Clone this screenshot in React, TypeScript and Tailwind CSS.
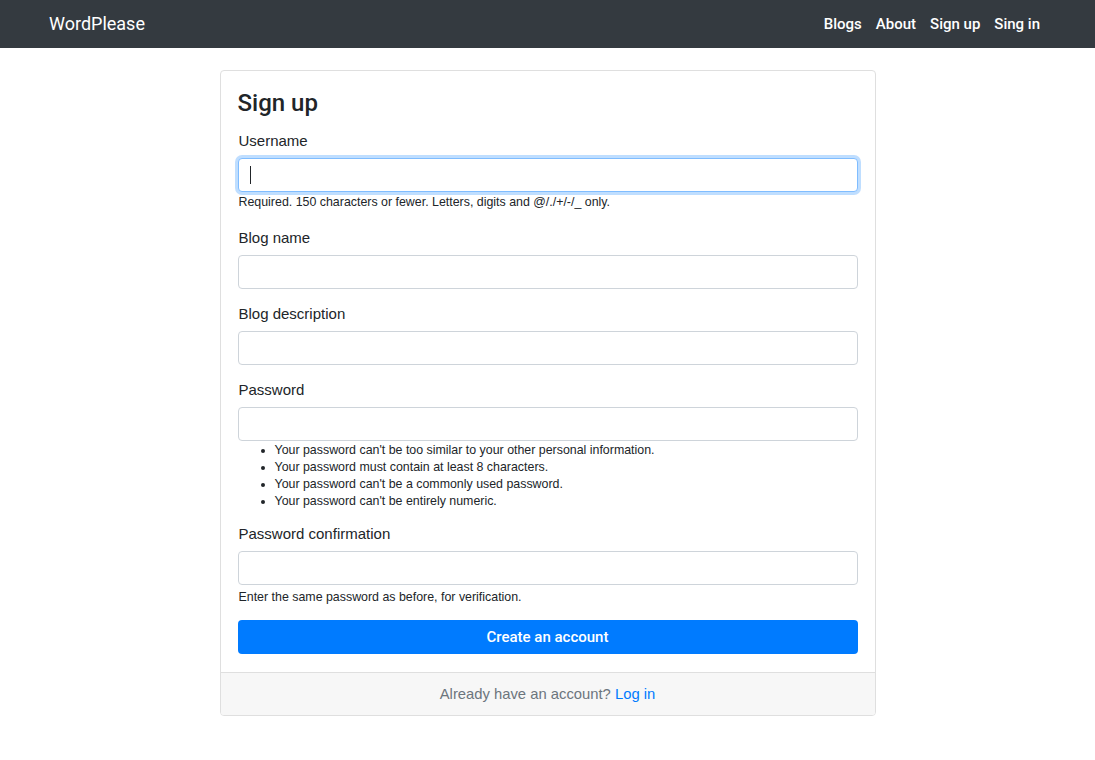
import React from "react";

const font = { fontFamily: '"Liberation Sans", Arial, sans-serif' };
const medium = { fontFamily: 'Roboto, "Liberation Sans", Arial, sans-serif' };

function Field({
  label,
  type = "text",
  focused = false,
  className = "mb-[14px]",
  children,
}: {
  label: string;
  type?: string;
  focused?: boolean;
  className?: string;
  children?: React.ReactNode;
}) {
  return (
    <div className={className}>
      <label className="block text-[15px] leading-[22px] mb-[6px] pl-px text-[#212529]">{label}</label>
      <div className="relative">
        <input
          type={type}
          className={
            "block w-full h-[34px] rounded-[4px] bg-white px-3 text-[15px] outline-none " +
            (focused
              ? "border border-[#80bdff] shadow-[0_0_0_3px_rgba(0,123,255,0.25)]"
              : "border border-[#ced4da]")
          }
        />
        {focused && (
          <span className="absolute left-[12px] top-[8px] h-[18px] w-px bg-[#212529]" />
        )}
      </div>
      {children}
    </div>
  );
}

export default function App() {
  return (
    <div className="min-h-screen bg-white text-[#212529]" style={font}>
      <nav className="h-[48px] bg-[#343a40] flex items-center justify-between pl-[49px] pr-[48px]">
        <span className="text-white text-[18px] leading-none" style={medium}>
          WordPlease
        </span>
        <div className="flex items-center text-white text-[15px] font-medium" style={medium}>
          <a className="px-[7px]">Blogs</a>
          <a className="px-[7px]">About</a>
          <a className="px-[7px]">Sign up</a>
          <a className="px-[7px]">Sing in</a>
        </div>
      </nav>

      <div className="flex justify-center pt-[22px]">
        <div className="w-[656px] border border-[#dfdfdf] rounded-[4px] overflow-hidden">
          <div className="px-[17px] pt-[18px] pb-[18px]">
            <h1 className="text-[24px] leading-[29px] font-medium mb-[12px]" style={medium}>
              Sign up
            </h1>
            <form>
              <Field label="Username" focused>
                <p className="text-[12.4px] leading-[15px] mt-[3px] mb-[17px] pl-px">
                  Required. 150 characters or fewer. Letters, digits and @/./+/-/_ only.
                </p>
              </Field>
              <Field label="Blog name" />
              <Field label="Blog description" />
              <Field label="Password" type="password" className="mb-[13px]">
                <ul className="list-disc pl-[37px] text-[12.4px] leading-[17px] mt-[1px] mb-0">
                  <li>Your password can't be too similar to your other personal information.</li>
                  <li>Your password must contain at least 8 characters.</li>
                  <li>Your password can't be a commonly used password.</li>
                  <li>Your password can't be entirely numeric.</li>
                </ul>
              </Field>
              <Field label="Password confirmation" type="password" className="mb-[15px]">
                <p className="text-[12.4px] leading-[15px] mt-[5px] mb-0 pl-px">
                  Enter the same password as before, for verification.
                </p>
              </Field>
              <button
                type="button"
                className="block w-full h-[34px] rounded-[4px] bg-[#007bff] text-white text-[15px] font-medium"
                style={medium}
              >
                Create an account
              </button>
            </form>
          </div>
          <div className="h-[43px] bg-[#f7f7f7] border-t border-[#dfdfdf] flex items-center justify-center text-[14.8px] text-[#6c757d]">
            <span>
              Already have an account? <a className="text-[#007bff]">Log in</a>
            </span>
          </div>
        </div>
      </div>
    </div>
  );
}
